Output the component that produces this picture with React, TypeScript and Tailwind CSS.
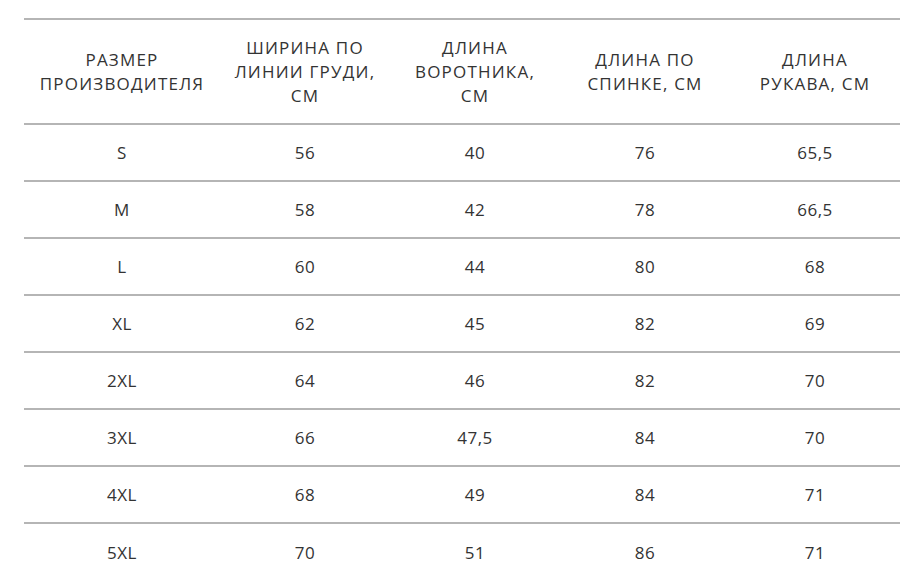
const headers = [
  ['РАЗМЕР', 'ПРОИЗВОДИТЕЛЯ'],
  ['ШИРИНА ПО', 'ЛИНИИ ГРУДИ,', 'СМ'],
  ['ДЛИНА', 'ВОРОТНИКА,', 'СМ'],
  ['ДЛИНА ПО', 'СПИНКЕ, СМ'],
  ['ДЛИНА', 'РУКАВА, СМ'],
];

const rows = [
  ['S', '56', '40', '76', '65,5'],
  ['M', '58', '42', '78', '66,5'],
  ['L', '60', '44', '80', '68'],
  ['XL', '62', '45', '82', '69'],
  ['2XL', '64', '46', '82', '70'],
  ['3XL', '66', '47,5', '84', '70'],
  ['4XL', '68', '49', '84', '71'],
  ['5XL', '70', '51', '86', '71'],
];

export default function App() {
  return (
    <div className="min-h-screen bg-white pt-[18px] pl-[24px] text-[#333] font-['Open_Sans',sans-serif]">
      <table className="w-[876px] border-separate border-spacing-0 text-[17px] leading-[24px]">
        <colgroup>
          <col className="w-[196px]" />
          <col className="w-[170px]" />
          <col className="w-[170px]" />
          <col className="w-[170px]" />
          <col className="w-[170px]" />
        </colgroup>
        <thead>
          <tr>
            {headers.map((lines, i) => (
              <th
                key={i}
                className="h-[107px] border-y-2 border-[#b5b5b5] text-center align-middle font-normal tracking-[1.2px]"
              >
                {lines.map((l, j) => (
                  <div key={j}>{l}</div>
                ))}
              </th>
            ))}
          </tr>
        </thead>
        <tbody>
          {rows.map((r, i) => (
            <tr key={i}>
              {r.map((c, j) => (
                <td
                  key={j}
                  className={`h-[57px] text-center align-middle tracking-[0.5px] ${
                    i < rows.length - 1 ? 'border-b-2 border-[#b5b5b5]' : ''
                  }`}
                >
                  {c}
                </td>
              ))}
            </tr>
          ))}
        </tbody>
      </table>
    </div>
  );
}
